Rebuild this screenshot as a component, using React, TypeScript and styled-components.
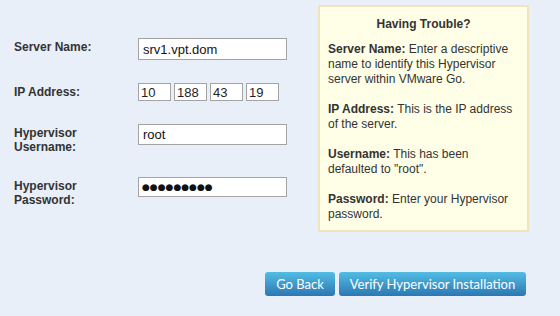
import React from "react";
import styled, { createGlobalStyle } from "styled-components";

const Global = createGlobalStyle`
  html, body { margin: 0; padding: 0; background: #e9eff8; }
  body { font-family: "Liberation Sans", Arial, sans-serif; font-size: 12px; color: #333; }
`;

const Page = styled.div`
  width: 560px;
  height: 316px;
  display: flex;
  flex-direction: column;
  background: #e9eff8;
`;

const Top = styled.div`
  display: flex;
  align-items: flex-start;
`;

const Form = styled.div`
  width: 304px;
  padding: 38px 0 0 14px;
  display: flex;
  flex-direction: column;
  gap: 23px;
`;

const Row = styled.div`
  display: flex;
  align-items: flex-start;
`;

const Label = styled.div`
  width: 124px;
  padding-top: 2px;
  font-weight: bold;
  font-size: 12px;
  line-height: 14px;
  color: #333;
`;

const TextInput = styled.input<{ $h: number; $dots?: boolean }>`
  box-sizing: border-box;
  width: 149px;
  height: ${(p) => p.$h}px;
  margin: 0;
  border: 1px solid #a3a3a3;
  background: #fff;
  padding: 0 ${(p) => (p.$dots ? 3 : 4)}px;
  font-family: ${(p) => (p.$dots ? '"DejaVu Sans", sans-serif' : '"Liberation Sans", Arial, sans-serif')};
  font-size: ${(p) => (p.$dots ? 9 : 13)}px;
  letter-spacing: 0;
  color: #111;
  outline: none;
`;

const IpGroup = styled.div`
  display: flex;
  gap: 3px;
`;

const IpBox = styled.input`
  box-sizing: border-box;
  width: 33px;
  height: 18px;
  margin: 0;
  border: 1px solid #a3a3a3;
  background: #fff;
  padding: 0 2px;
  font-family: "Liberation Sans", Arial, sans-serif;
  font-size: 13px;
  color: #222;
  outline: none;
`;

const Help = styled.div`
  box-sizing: border-box;
  margin-top: 5px;
  width: 211px;
  height: 227px;
  border: 2px solid #efe4bc;
  background: #fffee6;
  padding: 10px 8px 0 8px;
  font-size: 12px;
  line-height: 15px;
  color: #333;
`;

const HelpTitle = styled.div`
  text-align: center;
  font-weight: bold;
  margin-bottom: 10px;
`;

const HelpPara = styled.p`
  margin: 0 0 15px 0;
  b { font-weight: bold; }
`;

const Buttons = styled.div`
  display: flex;
  justify-content: flex-end;
  gap: 4px;
  padding: 40px 34px 0 0;
`;

const Button = styled.button<{ $w: number }>`
  box-sizing: border-box;
  width: ${(p) => p.$w}px;
  height: 24px;
  border: none;
  border-radius: 3px;
  background: linear-gradient(#52bde3, #2c77b3);
  color: #fff;
  font-family: Lato, "Liberation Sans", sans-serif;
  font-size: 13px;
  padding: 0;
  cursor: pointer;
`;

export default function App() {
  return (
    <Page>
      <Global />
      <Top>
        <Form>
          <Row>
            <Label>Server Name:</Label>
            <TextInput $h={22} readOnly value="srv1.vpt.dom" />
          </Row>
          <Row>
            <Label>IP Address:</Label>
            <IpGroup>
              <IpBox readOnly value="10" />
              <IpBox readOnly value="188" />
              <IpBox readOnly value="43" />
              <IpBox readOnly value="19" />
            </IpGroup>
          </Row>
          <Row>
            <Label>
              Hypervisor
              <br />
              Username:
            </Label>
            <TextInput $h={21} readOnly value="root" />
          </Row>
          <Row>
            <Label>
              Hypervisor
              <br />
              Password:
            </Label>
            <TextInput $h={20} $dots readOnly value="●●●●●●●●●" />
          </Row>
        </Form>
        <Help>
          <HelpTitle>Having Trouble?</HelpTitle>
          <HelpPara>
            <b>Server Name:</b> Enter a descriptive name to identify this Hypervisor server within VMware Go.
          </HelpPara>
          <HelpPara>
            <b>IP Address:</b> This is the IP address of the server.
          </HelpPara>
          <HelpPara>
            <b>Username:</b> This has been defaulted to "root".
          </HelpPara>
          <HelpPara>
            <b>Password:</b> Enter your Hypervisor password.
          </HelpPara>
        </Help>
      </Top>
      <Buttons>
        <Button $w={70}>Go Back</Button>
        <Button $w={187}>Verify Hypervisor Installation</Button>
      </Buttons>
    </Page>
  );
}
